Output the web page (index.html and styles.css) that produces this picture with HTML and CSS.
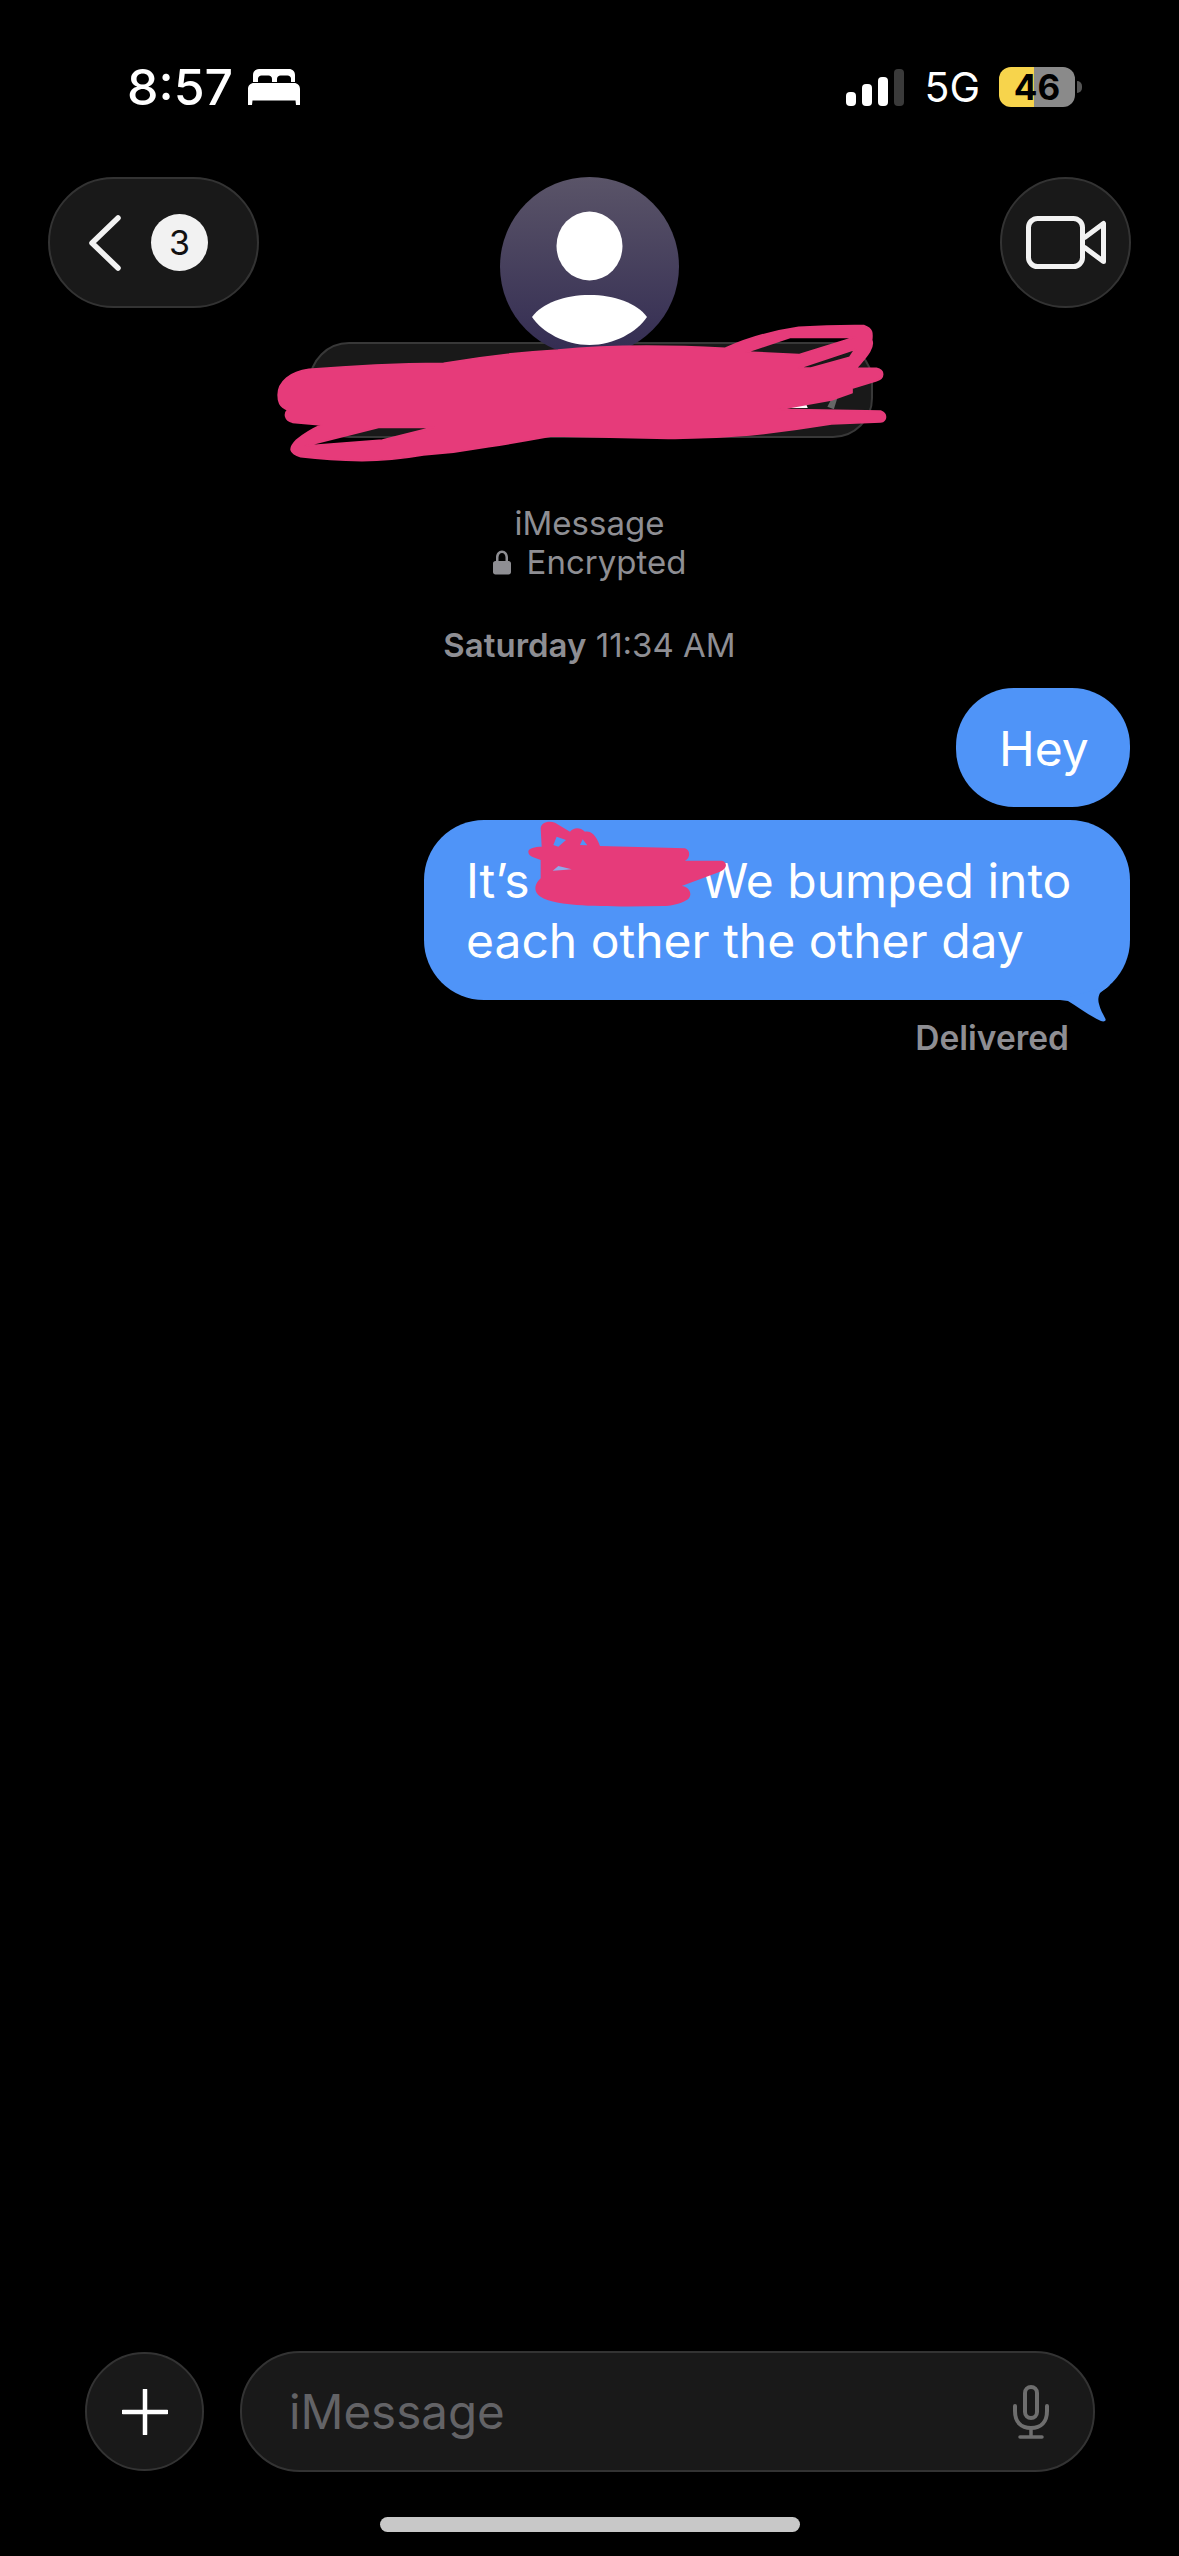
FILE: index.html
```html
<!DOCTYPE html>
<html lang="en">
<head>
    <meta charset="UTF-8">
    <title>Messages</title>
    <link rel="stylesheet" href="styles.css">
</head>
<body>
    <div class="phone">
        <!-- Status bar -->
        <div class="status">
            <span class="time">8:57</span>
            <svg class="bed" viewBox="0 0 52 36"><path fill="#fff" d="M5 13V6C5 2.500 7.500 0 11 0h30c3.500 0 6 2.500 6 6v7h-4v-3.500C43 8 41.500 6.500 39.500 6.500h-7C30.500 6.500 29 8 29 10v3h-5v-3c0-2-1.500-3.500-3.500-3.500h-7C11.500 6.500 10 8 10 9.500V13zM6 14h40c3.500 0 6 2.500 6 6v16h-4l-.500-4.500H4.500L4 36H0V20c0-3.500 2.500-6 6-6z"/></svg>
            <div class="status-right">
                <div class="signal">
                    <i class="bar bar-1"></i>
                    <i class="bar bar-2"></i>
                    <i class="bar bar-3"></i>
                    <i class="bar bar-4"></i>
                </div>
                <span class="network">5G</span>
                <div class="battery">46</div>
                <i class="battery-nub"></i>
            </div>
        </div>

        <!-- Nav -->
        <div class="nav">
            <div class="back">
                <svg class="chevron" viewBox="0 0 32 56"><path d="M29 3L3 28l26 25" fill="none" stroke="#f2f2f2" stroke-width="5.500" stroke-linecap="round" stroke-linejoin="round"/></svg>
                <span class="badge">3</span>
            </div>
            <div class="contact">
                <div class="avatar">
                    <svg class="avatar-person" viewBox="0 0 179 179"><ellipse cx="89.500" cy="69" rx="33" ry="34.500" fill="#fff"/><path fill="#fff" d="M32 140c10-14 33-22 57.500-22s47.500 8 57.500 22c-10 15-33 28-57.500 28S42 155 32 140z"/></svg>
                </div>
                <div class="name-pill"></div>
                <svg class="scribble-name" viewBox="0 0 1568 480" preserveAspectRatio="none">
                    <path fill="#fff" d="M1228 292h20v4h-20zM1278 290l58-14 6 18h-60z"/>
                    <path fill="#666" d="M1390 290l14-32h12l-10 40z"/>
                    <path fill="#e63b7a" stroke="#e63b7a" stroke-width="5" stroke-linejoin="round" fill-rule="evenodd" d="M45 255C45 215 75 185 120 178Q280 162 450 160Q590 130 730 120Q900 100 1140 115Q1220 70 1320 52Q1400 46 1480 47C1500 55 1500 70 1498 90 1505 110 1490 135 1460 175H1510C1530 180 1530 205 1510 212L1450 235 1450 248 1400 270 1270 298 1520 303C1536 310 1536 332 1520 336L1400 342Q1300 362 1200 375Q1100 386 1000 385L715 378Q640 395 560 410Q480 428 400 435Q320 452 250 452Q170 450 100 440C72 430 70 415 90 390Q115 365 150 345L80 337C60 330 60 310 68 300 48 290 45 275 45 255ZM110 408L290 352 425 352 300 390ZM1192 126L1320 134 1458 82 1300 82ZM1320 174L1458 118 1445 142 1350 174Z"/>
                </svg>
            </div>
            <div class="video">
                <svg class="video-icon" viewBox="0 0 80 53"><rect x="2.500" y="2.500" width="54" height="48" rx="9" fill="none" stroke="#f2f2f2" stroke-width="5"/><path d="M58 22L77.500 7.500V45.500L58 31" fill="none" stroke="#f2f2f2" stroke-width="5" stroke-linejoin="round"/></svg>
            </div>
        </div>

        <!-- Thread -->
        <div class="thread">
            <div class="service">
                <div>iMessage</div>
                <div class="encrypted">
                    <svg class="lock" viewBox="0 0 18 25"><path fill="#8e8e93" d="M3 11V7.500C3 3.500 5.500 0.500 9 0.500s6 3 6 7V11h.5c1.500 0 2.500 1 2.500 2.500V22c0 1.500-1 2.500-2.500 2.500h-13C1 24.500 0 23.500 0 22v-8.500C0 12 1 11 2.500 11zm2.500 0h7V7.500c0-2.500-1.500-4.500-3.500-4.500S5.500 5 5.500 7.500z"/></svg>
                    <span>Encrypted</span>
                </div>
            </div>
            <div class="timestamp"><b>Saturday</b> 11:34 AM</div>

            <div class="bubble bubble-short">Hey</div>
            <div class="bubble bubble-long">
                It’s <span class="name-gap"></span>We bumped into<br>each other the other day
                <svg class="tail" viewBox="0 0 55 47"><path fill="#4f94f8" d="M0 25L50 10C46 14 42 16 40 18 38 22 38 26 39 29 40 34 43 39 45 43 47 46 44 47 41 46 30 41 18 32 8 26Z"/></svg>
                <svg class="scribble-text" viewBox="0 0 720 390" preserveAspectRatio="none">
                    <path fill="#e63b7a" fill-rule="evenodd" d="M85 155C85 145 105 140 125 140L122 85C122 68 145 60 165 68L210 95C220 82 240 80 255 95 265 92 285 95 300 138L555 145C572 150 572 175 555 182H665C682 185 684 205 660 215L545 258C575 262 578 292 560 300 540 312 510 318 490 318 400 320 300 320 230 315 170 310 130 300 115 285 100 270 105 250 122 235V180L100 172C90 168 85 162 85 155ZM160 135L170 110 198 120 175 140ZM240 135L248 118 262 136Z"/>
                    <path fill="#8fa8e8" d="M158 212L175 198 215 208 190 210Z"/>
                </svg>
            </div>
            <div class="delivered">Delivered</div>
        </div>

        <!-- Composer -->
        <div class="composer">
            <div class="plus">
                <svg class="plus-icon" viewBox="0 0 46 46"><path d="M23 1V45M1 23H45" fill="none" stroke="#fff" stroke-width="4.500" stroke-linecap="round"/></svg>
            </div>
            <div class="input">
                <span>iMessage</span>
                <svg class="mic" viewBox="0 0 38 54"><g fill="none" stroke="#6e6e6e" stroke-width="4" stroke-linecap="round"><rect x="13" y="2" width="12" height="31" rx="6"/><path d="M3 21v5c0 11 6 17 16 17s16-6 16-17v-5"/></g><path d="M19 43v9M8 52h22" fill="none" stroke="#6e6e6e" stroke-width="3.500" stroke-linecap="round"/></svg>
            </div>
        </div>
        <div class="home-bar"></div>
    </div>
</body>
</html>
```
FILE: styles.css
```css
* {
    box-sizing: border-box;
}

body {
    margin: 0;
    padding: 0;
    background-color: #000;
    font-family: Inter, "Liberation Sans", sans-serif;
}

.phone {
    width: 1179px;
    height: 2556px;
    display: flex;
    flex-direction: column;
    overflow: hidden;
}

/* Status bar */
.status {
    display: flex;
    align-items: center;
    height: 40px;
    margin-top: 67px;
    padding-left: 127px;
    color: #fff;
}

.time {
    font-size: 50px;
    font-weight: 500;
    line-height: 40px;
}

.bed {
    width: 52px;
    height: 36px;
    margin-left: 15px;
}

.status-right {
    display: flex;
    align-items: center;
    margin-left: auto;
    margin-right: 97px;
}

.signal {
    display: flex;
    align-items: flex-end;
    gap: 6px;
    height: 37px;
    margin-right: 20px;
}

.bar {
    width: 10px;
    background-color: #fff;
    border-radius: 4px;
}

.bar-1 { height: 14px; }
.bar-2 { height: 22px; }
.bar-3 { height: 29px; }
.bar-4 { height: 37px; background-color: #3a3a3a; }

.network {
    font-size: 41px;
    font-weight: 400;
    margin-right: 19px;
}

.battery {
    width: 76px;
    height: 40px;
    border-radius: 12px;
    background: linear-gradient(90deg, #f7d44c 46%, #8a8a8a 46%);
    color: #000;
    font-size: 35px;
    font-weight: 700;
    line-height: 40px;
    text-align: center;
}

.battery-nub {
    width: 5px;
    height: 12px;
    margin-left: 2px;
    background-color: #555;
    border-radius: 0 6px 6px 0;
}

/* Nav */
.nav {
    display: flex;
    align-items: flex-start;
    margin-top: 70px;
    padding: 0 48px;
}

.back {
    display: flex;
    align-items: center;
    width: 211px;
    height: 131px;
    padding-left: 39px;
    background-color: #191919;
    border: 2px solid #333;
    border-radius: 66px;
}

.chevron {
    width: 32px;
    height: 56px;
}

.badge {
    width: 57px;
    height: 57px;
    margin-left: 30px;
    background-color: #f2f2f2;
    border-radius: 50%;
    color: #111;
    font-size: 34px;
    line-height: 57px;
    text-align: center;
}

.contact {
    position: relative;
    display: flex;
    flex-direction: column;
    align-items: center;
    width: 564px;
    margin-left: 50px;
}

.avatar {
    position: relative;
    z-index: 1;
    width: 179px;
    height: 179px;
    margin-right: 3px;
    background: linear-gradient(180deg, #5a5468 0%, #332c52 100%);
    border-radius: 50%;
}

.avatar-person {
    display: block;
    width: 179px;
    height: 179px;
}

.name-pill {
    width: 564px;
    height: 96px;
    margin-top: -14px;
    background-color: #191919;
    border: 2px solid #383838;
    border-radius: 40px;
}

.scribble-name {
    position: absolute;
    z-index: 2;
    left: -49px;
    top: 133px;
    width: 640px;
    height: 160px;
}

.video {
    display: flex;
    align-items: center;
    justify-content: center;
    width: 131px;
    height: 131px;
    margin-left: auto;
    background-color: #191919;
    border: 2px solid #333;
    border-radius: 50%;
}

.video-icon {
    width: 80px;
    height: 53px;
}

/* Thread */
.thread {
    display: flex;
    flex-direction: column;
    padding-right: 49px;
    margin-top: 66px;
}

.service {
    margin-left: 49px;
    color: #8e8e93;
    font-size: 33px;
    line-height: 39px;
    text-align: center;
}

.encrypted {
    display: flex;
    align-items: center;
    justify-content: center;
    gap: 16px;
}

.lock {
    width: 18px;
    height: 25px;
}

.timestamp {
    margin: 43px 0 0 49px;
    color: #8e8e93;
    font-size: 33px;
    line-height: 40px;
    text-align: center;
}

.timestamp b {
    font-weight: 600;
}

.bubble {
    align-self: flex-end;
    background-color: #4f94f8;
    color: #fff;
    font-size: 48px;
    line-height: 60px;
}

.bubble-short {
    width: 174px;
    height: 119px;
    margin-top: 23px;
    padding: 31px 0 0 43px;
    border-radius: 58px;
}

.bubble-long {
    position: relative;
    width: 706px;
    height: 180px;
    margin-top: 13px;
    padding: 31px 0 0 42px;
    border-radius: 60px;
    white-space: nowrap;
}

.name-gap {
    display: inline-block;
    width: 158px;
}

.tail {
    position: absolute;
    right: 15px;
    bottom: -22px;
    width: 55px;
    height: 47px;
}

.scribble-text {
    position: absolute;
    left: 76px;
    top: -20px;
    width: 240px;
    height: 130px;
}

.delivered {
    align-self: flex-end;
    margin: 18px 61px 0 0;
    color: #8e8e93;
    font-size: 33.500px;
    font-weight: 600;
    line-height: 40px;
}

/* Composer */
.composer {
    display: flex;
    align-items: center;
    margin-top: auto;
    padding: 0 84px 0 85px;
    gap: 36px;
}

.plus {
    display: flex;
    align-items: center;
    justify-content: center;
    flex: none;
    width: 119px;
    height: 119px;
    background-color: #191919;
    border: 2px solid #333;
    border-radius: 50%;
}

.plus-icon {
    width: 46px;
    height: 46px;
}

.input {
    display: flex;
    align-items: center;
    justify-content: space-between;
    flex: 1;
    height: 121px;
    padding: 0 43px 0 47px;
    background-color: #191919;
    border: 2px solid #333;
    border-radius: 60px;
    color: #636366;
    font-size: 47.500px;
}

.mic {
    width: 38px;
    height: 54px;
}

.home-bar {
    width: 420px;
    height: 15px;
    margin: 45px auto 24px;
    background-color: #c8c8c8;
    border-radius: 8px;
}
```
